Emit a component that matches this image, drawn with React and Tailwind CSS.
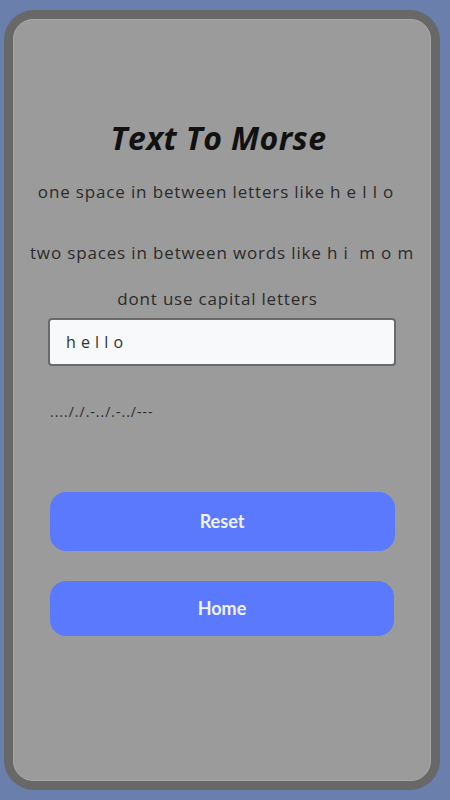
import { useState } from 'react'

const codes = {
  a: '.-', b: '-...', c: '-.-.', d: '-..', e: '.', f: '..-.', g: '--.', h: '....', i: '..', j: '.---',
  k: '-.-', l: '.-..', m: '--', n: '-.', o: '---', p: '.--.', q: '--.-', r: '.-.', s: '...', t: '-',
  u: '..-', v: '...-', w: '.--', x: '-..-', y: '-.--', z: '--..',
}

const toMorse = txt => txt.split('  ').map(w => w.split(' ').filter(Boolean).map(c => codes[c] || '').join('/')).join(' / ')

export default function App() {
  const [text, setText] = useState('h e l l o')

  return (
    <div className="min-h-[800px] bg-[#6b7fac] pl-[4px] pr-[10px] pt-[10px] pb-[10px] font-['Open_Sans','Noto_Sans',sans-serif]">
      <div className="h-[780px] rounded-[30px] bg-[#686868] p-[9px]">
        <div className="h-full rounded-[20px] border border-[#a8a8a8] bg-[#9b9b9b] flex flex-col items-center pt-[100px]">
          <h1 className="pr-[7px] text-[32px] leading-[36px] font-bold italic tracking-[0.4px] text-[#111]">Text To Morse</h1>
          <p className="pr-[12px] mt-[24px] text-[17px] leading-[24px] tracking-[0.85px] text-[#2b2b2b]">one space in between letters like h e l l o</p>
          <p className="mt-[37px] text-[17px] leading-[24px] tracking-[0.85px] text-[#2b2b2b]">two spaces in between words like h i&nbsp;&nbsp;m o m</p>
          <p className="pr-[9px] mt-[22px] text-[17px] leading-[24px] tracking-[0.8px] text-[#2b2b2b]">dont use capital letters</p>
          <input
            value={text}
            onChange={e => setText(e.target.value)}
            className="mt-[7px] w-[348px] h-[48px] rounded-[4px] border-2 border-[#6a6a6a] bg-[#f8f9fa] px-[16px] text-[16px] tracking-[0.5px] text-[#333] outline-none"
          />
          <p className="mt-[36px] self-start ml-[36px] text-[14px] leading-[20px] tracking-[1px] text-[#2b2b2b]">{toMorse(text)}</p>
          <button onClick={() => setText('')} className="mt-[70px] w-[345px] h-[59px] rounded-[16px] bg-[#5b79fd] font-['Lato',sans-serif] text-[18px] font-bold text-[#f0f2ff]">Reset</button>
          <button className="mt-[30px] w-[344px] h-[55px] rounded-[16px] bg-[#5b79fd] font-['Lato',sans-serif] text-[18px] font-bold text-[#f0f2ff]">Home</button>
        </div>
      </div>
    </div>
  )
}
